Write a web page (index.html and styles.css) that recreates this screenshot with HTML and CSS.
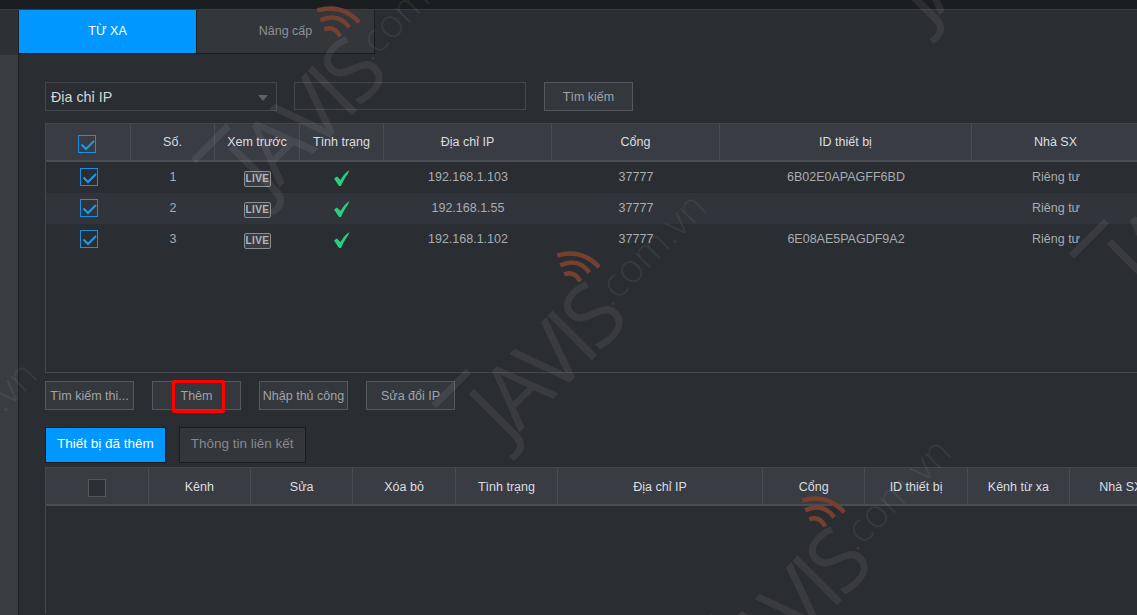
FILE: index.html
```html
<!DOCTYPE html>
<html lang="vi">
<head>
    <meta charset="UTF-8">
    <title>Từ xa</title>
    <link rel="stylesheet" href="styles.css">
</head>
<body>

<svg class="icon-defs" width="0" height="0">
    <symbol id="tick" viewBox="0 0 16 16">
        <path d="M2.5 8.5 L7 13 L15 5" fill="none" stroke="#1a9bf2" stroke-width="2"/>
    </symbol>
    <symbol id="ok" viewBox="0 0 16 16">
        <path d="M0 8.5 L3 6.5 L6.5 10 C8.5 6.5 11 3 15.5 0 L14 3.5 C11.5 7 9 11 7 16 L5 16 Z" fill="#27d17c"/>
    </symbol>
    <symbol id="wifi" viewBox="0 0 44 32">
        <path d="M1 5 Q26 -2 43 17 M4 15 Q22 7 33 22 M8 24 Q18 20 24 31" fill="none" stroke="#75402f" stroke-width="4.5"/>
    </symbol>
</svg>

<div class="topbar"></div>
<div class="page">
    <div class="side">
        <div class="side-top"></div>
    </div>
    <div class="main">
        <div class="tabs">
            <div class="tab tab-on">TỪ XA</div>
            <div class="tab">Nâng cấp</div>
        </div>

        <div class="filter">
            <div class="select">Địa chỉ IP<span class="caret"></span></div>
            <div class="input"></div>
            <div class="btn btn-search">Tìm kiếm</div>
        </div>

        <div class="grid grid-top">
            <div class="row head">
                <div class="cell c1"><span class="check"><svg><use href="#tick"/></svg></span></div>
                <div class="cell c2">Số.</div>
                <div class="cell c3">Xem trước</div>
                <div class="cell c4">Tình trạng</div>
                <div class="cell c5">Địa chỉ IP</div>
                <div class="cell c6">Cổng</div>
                <div class="cell c7">ID thiết bị</div>
                <div class="cell c8">Nhà SX</div>
            </div>
            <div class="row">
                <div class="cell c1"><span class="check"><svg><use href="#tick"/></svg></span></div>
                <div class="cell c2">1</div>
                <div class="cell c3"><span class="live">LIVE</span></div>
                <div class="cell c4"><svg class="ok"><use href="#ok"/></svg></div>
                <div class="cell c5">192.168.1.103</div>
                <div class="cell c6">37777</div>
                <div class="cell c7">6B02E0APAGFF6BD</div>
                <div class="cell c8">Riêng tư</div>
            </div>
            <div class="row alt">
                <div class="cell c1"><span class="check"><svg><use href="#tick"/></svg></span></div>
                <div class="cell c2">2</div>
                <div class="cell c3"><span class="live">LIVE</span></div>
                <div class="cell c4"><svg class="ok"><use href="#ok"/></svg></div>
                <div class="cell c5">192.168.1.55</div>
                <div class="cell c6">37777</div>
                <div class="cell c7"></div>
                <div class="cell c8">Riêng tư</div>
            </div>
            <div class="row">
                <div class="cell c1"><span class="check"><svg><use href="#tick"/></svg></span></div>
                <div class="cell c2">3</div>
                <div class="cell c3"><span class="live">LIVE</span></div>
                <div class="cell c4"><svg class="ok"><use href="#ok"/></svg></div>
                <div class="cell c5">192.168.1.102</div>
                <div class="cell c6">37777</div>
                <div class="cell c7">6E08AE5PAGDF9A2</div>
                <div class="cell c8">Riêng tư</div>
            </div>
        </div>

        <div class="actions">
            <div class="btn">Tìm kiếm thi...</div>
            <div class="btn btn-mark">Thêm<span class="mark"></span></div>
            <div class="btn">Nhập thủ công</div>
            <div class="btn">Sửa đổi IP</div>
        </div>

        <div class="subtabs">
            <div class="subtab subtab-on">Thiết bị đã thêm</div>
            <div class="subtab">Thông tin liên kết</div>
        </div>

        <div class="grid grid-bottom">
            <div class="row head">
                <div class="cell d1"><span class="check check-off"></span></div>
                <div class="cell d2">Kênh</div>
                <div class="cell d2">Sửa</div>
                <div class="cell d2">Xóa bỏ</div>
                <div class="cell d2">Tình trạng</div>
                <div class="cell d3">Địa chỉ IP</div>
                <div class="cell d2">Cổng</div>
                <div class="cell d2">ID thiết bị</div>
                <div class="cell d2">Kênh từ xa</div>
                <div class="cell d2">Nhà SX</div>
            </div>
        </div>
    </div>
</div>

<!-- watermark stamps, placed freely over the page -->
<div class="stamp stamp-a"><span class="stamp-name">JAVIS</span><span class="stamp-site">.com.vn</span><svg class="wifi"><use href="#wifi"/></svg></div>
<div class="stamp stamp-b"><span class="stamp-name">JAVIS</span><span class="stamp-site">.com.vn</span><svg class="wifi"><use href="#wifi"/></svg></div>
<div class="stamp stamp-c"><span class="stamp-name">JAVIS</span><span class="stamp-site">.com.vn</span><svg class="wifi"><use href="#wifi"/></svg></div>
<div class="stamp stamp-d"><span class="stamp-name">JAVIS</span><span class="stamp-site">.com.vn</span><svg class="wifi"><use href="#wifi"/></svg></div>
<div class="stamp stamp-e"><span class="stamp-name">JAVIS</span><span class="stamp-site">.com.vn</span><svg class="wifi"><use href="#wifi"/></svg></div>
<div class="stamp stamp-f"><span class="stamp-name">JAVIS</span><span class="stamp-site">.com.vn</span><svg class="wifi"><use href="#wifi"/></svg></div>

</body>
</html>
```

FILE: styles.css
```css
html {
    height: 615px;
    overflow: hidden;
}

body {
    margin: 0;
    height: 615px;
    overflow: hidden;
    position: relative;
    font-family: "Liberation Sans", Arial, sans-serif;
    font-size: 12.5px;
    color: #a9acb1;
    background-color: #2a2d32;
}

.icon-defs {
    display: block;
}

.topbar {
    height: 9px;
    background-color: #1b1e21;
    border-bottom: 1px solid #3a3d43;
}

.page {
    display: flex;
    height: 605px;
}

.side {
    width: 18px;
    background-color: #3a3d42;
    border-right: 1px solid #1e2023;
}

.side-top {
    height: 45px;
    background-color: #2d3035;
}

.main {
    flex: 1;
    min-width: 0;
    padding-left: 26px;
    background-color: #2a2d32;
}

/* top tabs */
.tabs {
    display: flex;
    height: 44px;
    margin: 0 0 0 -26px;
}

.tab {
    width: 177px;
    line-height: 42px;
    text-align: center;
    color: #8d9095;
    background-color: #33363b;
    border-right: 1px solid #1a1c1f;
    border-bottom: 1px solid #1a1c1f;
}

.tab-on {
    color: #fff;
    background-color: #0098ff;
}

/* search row */
.filter {
    display: flex;
    align-items: flex-start;
    margin-top: 28px;
}

.select {
    position: relative;
    width: 225px;
    height: 27px;
    padding-left: 5px;
    line-height: 28px;
    font-size: 14.3px;
    color: #d5d7da;
    border: 1px solid #44474d;
}

.caret {
    position: absolute;
    right: 8px;
    top: 12px;
    border-left: 5px solid transparent;
    border-right: 5px solid transparent;
    border-top: 6px solid #5e6167;
}

.input {
    width: 230px;
    height: 26px;
    margin-left: 17px;
    border: 1px solid #44474d;
}

.btn {
    box-sizing: border-box;
    width: 89px;
    height: 29px;
    line-height: 29px;
    text-align: center;
    color: #a0a3a8;
    background-color: #34373c;
    border: 1px solid #55585e;
    white-space: nowrap;
}

.btn-search {
    margin-left: 18px;
}

/* tables */
.grid {
    border-left: 1px solid #44474d;
    border-top: 1px solid #44474d;
}

.grid-top {
    height: 248px;
    margin-top: 12px;
    border-bottom: 1px solid #44474d;
}

.row {
    display: flex;
    height: 31px;
    align-items: stretch;
}

.row.alt {
    background-color: #31343a;
}

.row.head {
    height: 36px;
    background-color: #393c42;
    border-bottom: 2px solid #4a4d54;
    color: #dcdee1;
}

.cell {
    box-sizing: border-box;
    display: flex;
    align-items: center;
    justify-content: center;
    flex-shrink: 0;
    padding-bottom: 1px;
}

.head .cell {
    padding-bottom: 0;
    border-right: 1px solid #4a4d54;
}

.grid-bottom .head .cell {
    padding-top: 2px;
}

.c1 { width: 85px; }
.c2 { width: 84px; }
.c3 { width: 85px; }
.c4 { width: 84px; }
.c5 { width: 168px; }
.c6 { width: 168px; }
.c7 { width: 252px; }
.c8 { width: 168px; }

.d1 { width: 102.6px; }
.d2 { width: 102.4px; }
.d3 { width: 204.8px; }

.check {
    box-sizing: border-box;
    display: block;
    width: 18px;
    height: 18px;
    border: 1px solid #1a8fe0;
}

.head .check {
    margin: 4px 2px 0 0;
}

.check svg {
    display: block;
    width: 16px;
    height: 16px;
}

.head .check-off {
    margin: 2px 0 0 0;
    background-color: #2c2f33;
    border-color: #55585e;
}

.live {
    box-sizing: border-box;
    display: block;
    width: 27px;
    height: 16px;
    margin-top: 4px;
    line-height: 14px;
    text-align: center;
    font-size: 10px;
    font-weight: bold;
    letter-spacing: 0.4px;
    color: #b3b6ba;
    background-color: #3a3c40;
    border: 1px solid #8b8e93;
    border-radius: 2px;
}

.ok {
    display: block;
    width: 16px;
    height: 16px;
    margin-top: 2px;
}

/* buttons under the top table */
.actions {
    display: flex;
    gap: 18px;
    margin-top: 8px;
}

.btn-mark {
    position: relative;
}

.mark {
    position: absolute;
    left: 19px;
    top: -2px;
    width: 47px;
    height: 27px;
    border: 3px solid #ff0000;
    border-radius: 2px;
}

.subtabs {
    display: flex;
    gap: 13px;
    margin-top: 17px;
}

.subtab {
    box-sizing: border-box;
    height: 36px;
    line-height: 32px;
    padding: 0 11px;
    font-size: 13.5px;
    color: #85888d;
    background-color: #33363b;
    border: 1px solid #1a1c1f;
    white-space: nowrap;
}

.subtab-on {
    color: #fff;
    background-color: #0098ff;
}

.grid-bottom {
    margin-top: 4px;
    height: 146px;
}

/* watermark */
.stamp {
    position: absolute;
    width: 420px;
    height: 90px;
    transform: rotate(-45deg);
    pointer-events: none;
    white-space: nowrap;
    color: rgba(255, 255, 255, 0.07);
}

/* the logo's J has a bar on top */
.stamp::before {
    content: "";
    position: absolute;
    left: -25px;
    top: -4px;
    width: 49px;
    height: 7px;
    background-color: rgba(255, 255, 255, 0.07);
}

.stamp-name {
    font-family: "Open Sans", sans-serif;
    font-size: 88px;
    letter-spacing: -7px;
    line-height: 90px;
}

.stamp-site {
    position: relative;
    top: -24px;
    font-family: "Open Sans", sans-serif;
    font-weight: 300;
    font-size: 40px;
}

.wifi {
    position: absolute;
    left: 154px;
    top: -13px;
    width: 44px;
    height: 32px;
    transform: rotate(45deg);
}

.stamp-b { left: 422px; top: 227px; }
.stamp-a { left: 182px; top: -18px; }
.stamp-c { left: 667px; top: 472px; }
.stamp-d { left: 842px; top: -190px; }
.stamp-e { left: 1060px; top: 77px; }
.stamp-f { left: -247px; top: 395px; }
```
